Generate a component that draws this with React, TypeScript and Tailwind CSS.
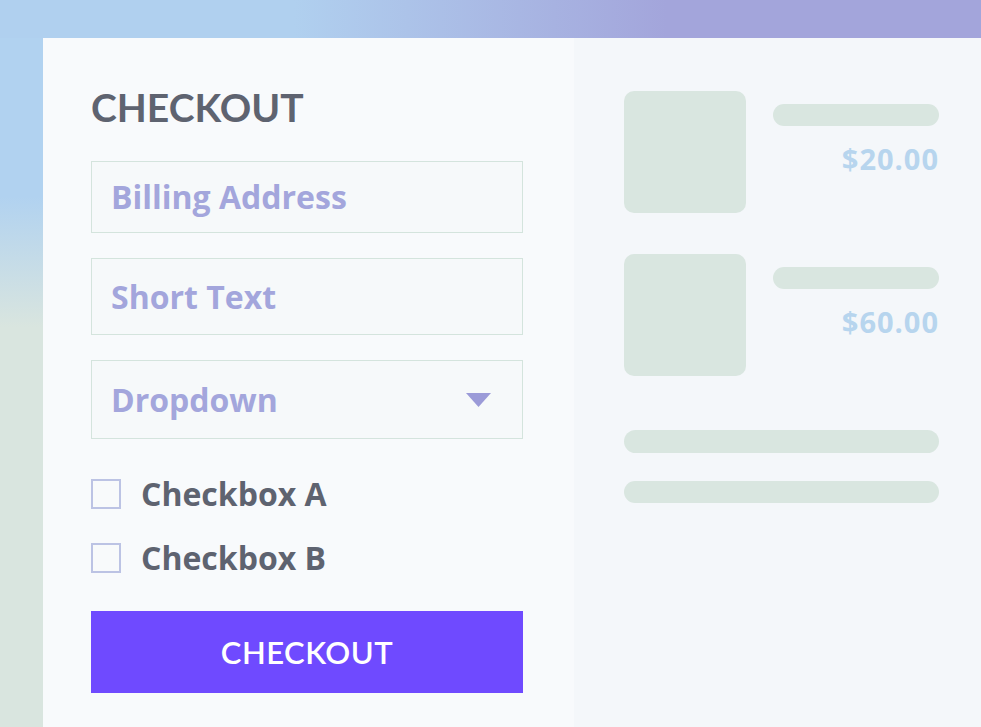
import React from "react";

const sans = "font-['Open_Sans',_'Liberation_Sans',_sans-serif]";
const geo = "font-['Lato',_'Open_Sans',_sans-serif]";

type FieldProps = {
  label: string;
  height: string;
  dropdown?: boolean;
};

const Field = ({ label, height, dropdown }: FieldProps) => (
  <div
    className={`${height} w-[432px] flex items-center justify-between border border-[#d4e4dd] bg-[#f6f9fa] pl-[19px] pr-[31px]`}
  >
    <span className={`${sans} text-[32px] leading-none font-bold text-[#a3a6dc]`}>
      {label}
    </span>
    {dropdown && (
      <svg width="25" height="14" viewBox="0 0 25 14">
        <path d="M0 0 H25 L12.5 14 Z" fill="#9b9bd8" />
      </svg>
    )}
  </div>
);

const Checkbox = ({ label }: { label: string }) => (
  <label className="flex items-center gap-[20px] h-[30px]">
    <span className="w-[30px] h-[30px] border-2 border-[#bcc3e4] bg-[#f8fafb]" />
    <span className={`${sans} text-[32px] leading-none font-bold text-[#5e6370]`}>
      {label}
    </span>
  </label>
);

const CartItem = ({ price }: { price: string }) => (
  <div className="flex gap-[27px]">
    <div className="w-[122px] h-[122px] rounded-[10px] bg-[#d9e6e0]" />
    <div className="flex-1 flex flex-col items-end pt-[13px]">
      <div className="w-full h-[22px] rounded-full bg-[#d9e6e0]" />
      <span
        className={`${sans} mt-[18px] text-[29px] leading-none font-bold tracking-[1px] text-[#b7d5ee]`}
      >
        {price}
      </span>
    </div>
  </div>
);

export default function App() {
  return (
    <div className="w-[981px] h-[727px] overflow-hidden flex flex-col">
      <div className="h-[38px] shrink-0 bg-[linear-gradient(to_right,#b0d0ef_30%,#a3a5db_68%)]" />
      <div className="flex flex-1">
        <div className="w-[43px] shrink-0 bg-[linear-gradient(to_bottom,#b1d2f0_23%,#d9e5df_42%)]" />
        <div className="flex flex-1">
          {/* checkout form */}
          <div className="w-[531px] shrink-0 bg-[#f8fafc] pl-[48px] pt-[50px]">
            <h1 className={`${geo} text-[39px] leading-none font-bold text-[#5e6370]`}>
              CHECKOUT
            </h1>
            <div className="mt-[34px] flex flex-col gap-[25px]">
              <Field label="Billing Address" height="h-[72px]" />
              <Field label="Short Text" height="h-[77px]" />
              <Field label="Dropdown" height="h-[79px]" dropdown />
            </div>
            <div className="mt-[40px] flex flex-col gap-[34px]">
              <Checkbox label="Checkbox A" />
              <Checkbox label="Checkbox B" />
            </div>
            <button
              className={`${geo} mt-[38px] w-[432px] h-[82px] bg-[#6f4aff] text-white text-[31px] font-semibold tracking-[0.5px]`}
            >
              CHECKOUT
            </button>
          </div>

          {/* order summary */}
          <div className="flex-1 bg-[#f4f7fa] pl-[50px] pr-[42px] pt-[53px]">
            <div className="flex flex-col gap-[41px]">
              <CartItem price="$20.00" />
              <CartItem price="$60.00" />
            </div>
            <div className="mt-[54px] flex flex-col gap-[28px]">
              <div className="h-[23px] rounded-full bg-[#d9e6e0]" />
              <div className="h-[22px] rounded-full bg-[#d9e6e0]" />
            </div>
          </div>
        </div>
      </div>
    </div>
  );
}
